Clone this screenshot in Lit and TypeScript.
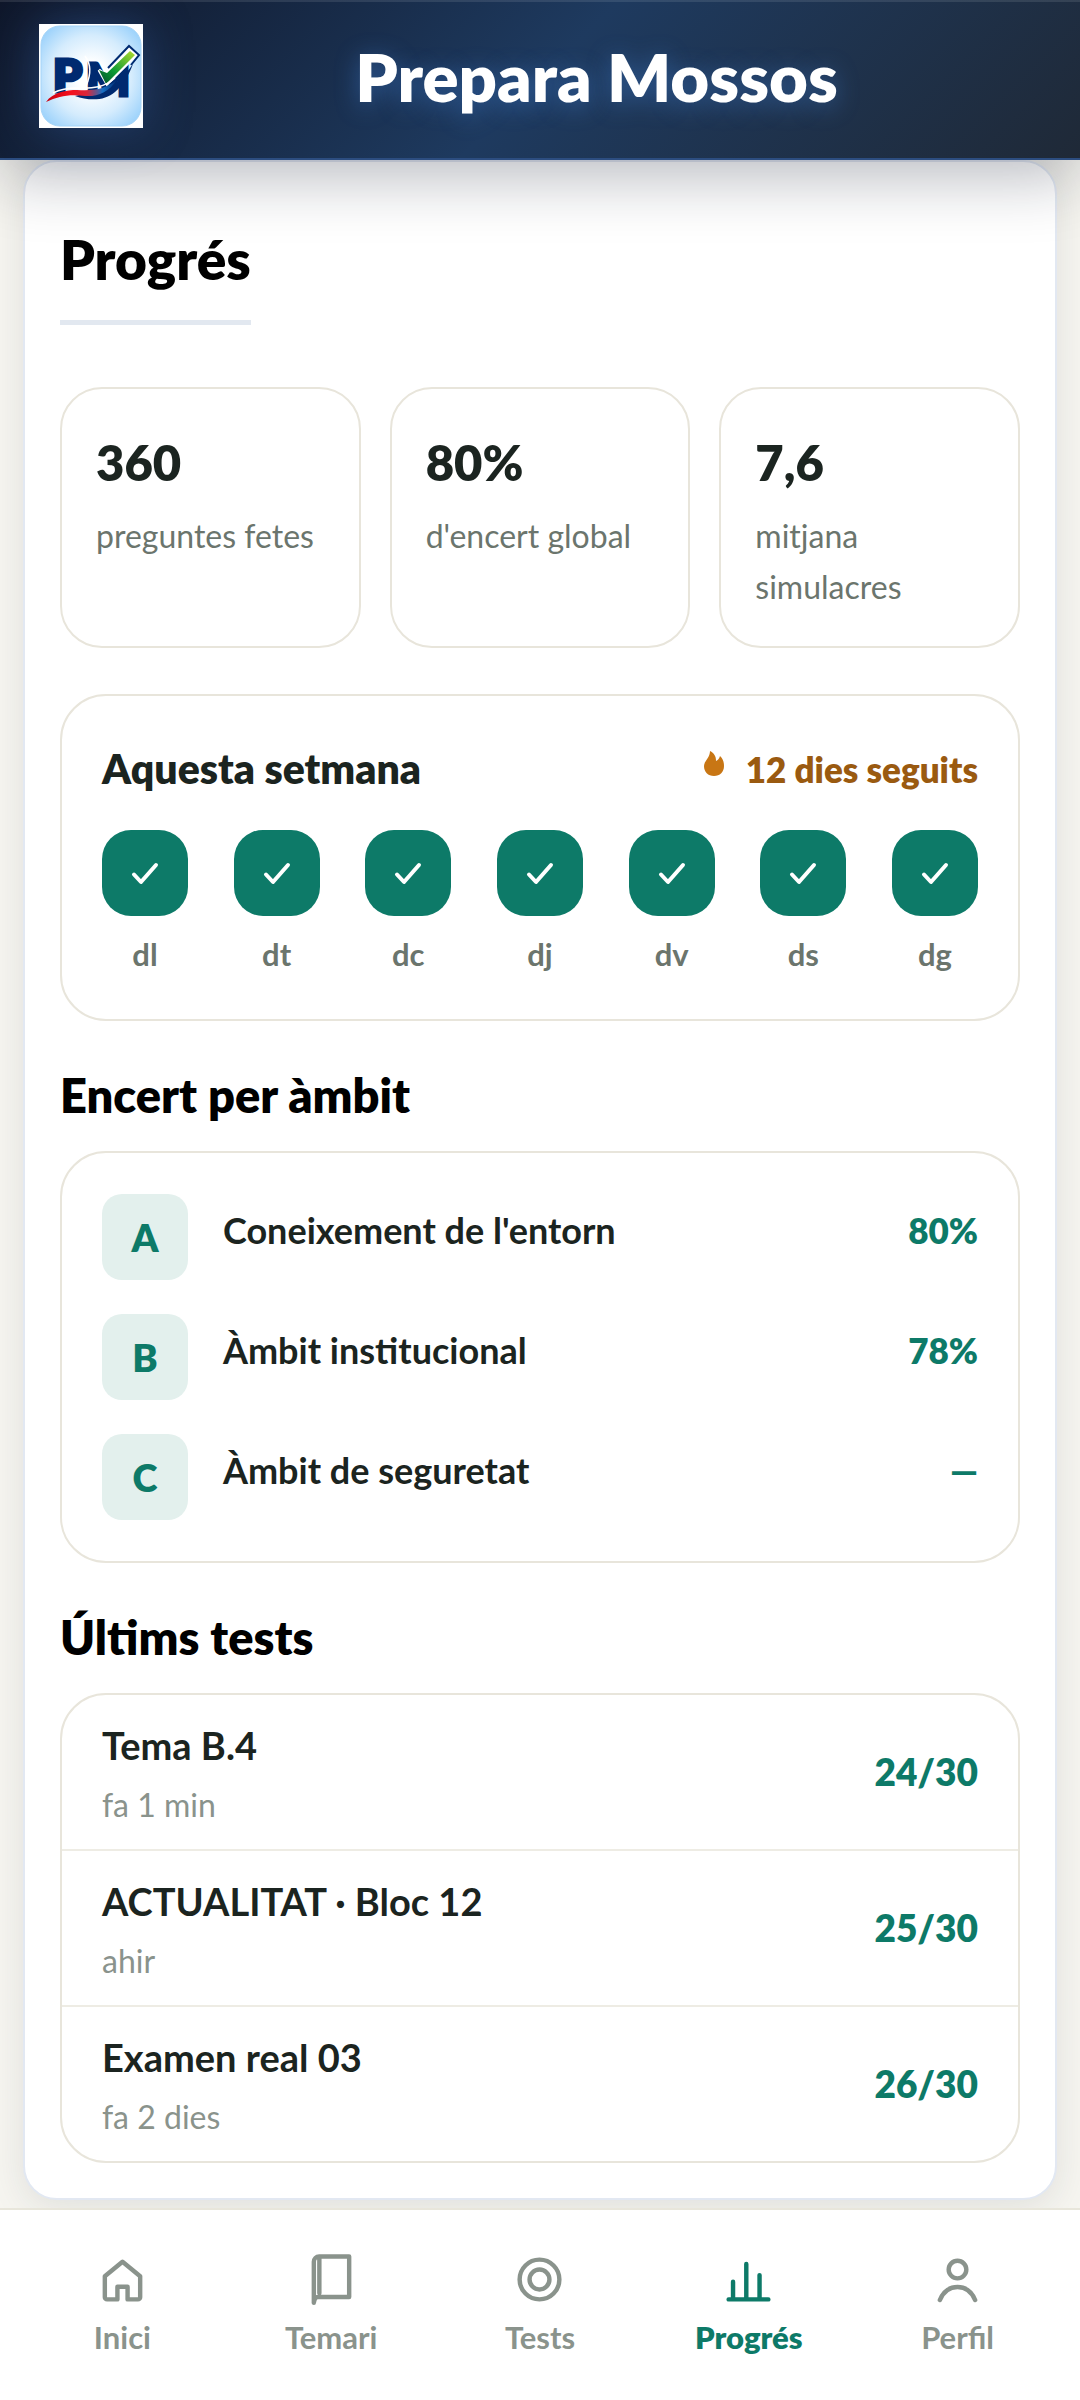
import { LitElement, html, css, svg } from "lit";
import { customElement, property } from "lit/decorators.js";

const NAV_ICONS: Record<string, unknown> = {
  home: svg`<path d="M4 10.5 12 4l8 6.5V20a1 1 0 0 1-1 1h-4.700v-5.700H9.700V21H5a1 1 0 0 1-1-1z"/>`,
  book: svg`<path d="M4 22.500V4a2.400 2.400 0 0 1 2.400-2.400H20v18.300H5.800c-1 0-1.500.7-1.800 2.600M6.500 1.700v16.500"/>`,
  target: svg`<circle cx="12" cy="12" r="9"/><circle cx="12" cy="12" r="4.500"/>`,
  bars: svg`<path d="M3 21h18M5 21v-8M11 21V5M17 21V10"/>`,
  user: svg`<circle cx="12" cy="7.500" r="4"/><path d="M4 21.300c1.600-3.800 4.300-5.900 8-5.900s6.400 2.100 8 5.900"/>`,
};

@customElement("pm-logo")
class PmLogo extends LitElement {
  static styles = css`
    :host { display: block; flex: none; width: 104px; height: 104px; box-shadow: 0 0 48px rgba(59, 110, 190, 0.4); }
    svg { display: block; width: 100%; height: 100%; }
    .mark { font: 800 46px "Lato", sans-serif; fill: #002a70; stroke: #002a70; stroke-width: 3; }
  `;
  render() {
    return html`<svg viewBox="0 0 104 104" role="img" aria-label="Prepara Mossos">
      <defs>
        <radialGradient id="tile" r="0.68">
          <stop offset="0.2" stop-color="#fff" />
          <stop offset="0.6" stop-color="#d5ecfd" />
          <stop offset="1" stop-color="#8fccfb" />
        </radialGradient>
        <linearGradient id="swoosh">
          <stop offset="0" stop-color="#c80010" />
          <stop offset="0.35" stop-color="#f5101d" />
          <stop offset="0.58" stop-color="#d8283c" />
          <stop offset="0.8" stop-color="#1670c4" />
          <stop offset="1" stop-color="#002a70" />
        </linearGradient>
        <linearGradient id="tick" x1="0" y1="1" x2="1" y2="0">
          <stop offset="0.1" stop-color="#04602f" />
          <stop offset="0.4" stop-color="#0b9a35" />
          <stop offset="1" stop-color="#b4dc2c" />
        </linearGradient>
      </defs>
      <rect width="104" height="104" fill="#fff" />
      <rect x="2" y="2" width="100" height="100" rx="19" fill="url(#tile)" stroke="#a5d4f8" />
      <text class="mark" x="47" y="72">M</text>
      <text class="mark" x="14" y="68">P</text>
      <path d="M46 32c6 8 6 19 1 30" fill="none" stroke="#fff" stroke-width="1.500" />
      <path d="M60 46 67 51 90 25 97 31 68 60z" fill="#fff" stroke="#fff" stroke-width="3" />
      <path d="M69 44 90 22l10 9-8 10" fill="none" stroke="#002a70" stroke-width="2" />
      <path d="M60 46 68 49 91 27 96 31 67 60z" fill="url(#tick)" />
      <path d="M36 72c14 5 30 5 40-4 8-7 14-17 18-28C84 54 72 66 56 67z" fill="#002a70" />
      <path d="M7 78c7-10 21-12 31-12 18 1 28-1 40-10-8 12-20 17-32 16-16-2-26 0-39 6z" fill="url(#swoosh)" />
      <path d="M14 69c8-4 16-5 24-5 16 1 28-1 38-10" fill="none" stroke="#fff" stroke-width="1.500" />
    </svg>`;
  }
}

@customElement("app-header")
class AppHeader extends LitElement {
  static styles = css`
    :host {
      display: flex;
      align-items: center;
      gap: 8px;
      box-sizing: border-box;
      padding: 24px 38px 30px 39px;
      border-bottom: 2px solid #2c4d80;
      background: linear-gradient(135deg, #0f172a 0%, #1e3a5f 50%, #1f2937 100%);
      box-shadow: inset 0 2px 0 rgba(255, 255, 255, 0.1), 0 16px 64px rgba(15, 23, 42, 0.3);
      position: relative;
      z-index: 2;
    }
    .title {
      flex: 1;
      margin: 0;
      color: #fff;
      font-size: 67px;
      font-weight: 800;
      line-height: 78px;
      text-align: center;
      text-shadow: 0 4px 24px rgba(70, 140, 230, 0.45);
    }
  `;
  render() {
    return html`<pm-logo></pm-logo><h1 class="title">Prepara Mossos</h1>`;
  }
}

@customElement("app-nav")
class AppNav extends LitElement {
  @property() current = "";
  static items = [
    ["home", "Inici"],
    ["book", "Temari"],
    ["target", "Tests"],
    ["bars", "Progrés"],
    ["user", "Perfil"],
  ];
  static styles = css`
    :host { display: block; position: sticky; bottom: 0; z-index: 2; background: #fff; border-top: 2px solid #e8e6db; }
    .bar { display: grid; grid-template-columns: repeat(5, 1fr); padding: 43px 18px 41px; }
    .item {
      display: flex;
      flex-direction: column;
      align-items: center;
      gap: 9px;
      color: #8a938c;
      font-size: 31px;
      font-weight: 700;
      line-height: 44px;
      text-decoration: none;
    }
    .item.on { color: #0d7a68; font-weight: 800; }
    .icon { width: 53px; height: 53px; fill: none; stroke: currentColor; stroke-width: 2; stroke-linecap: round; stroke-linejoin: round; }
  `;
  render() {
    return html`<nav class="bar" aria-label="Principal">
      ${AppNav.items.map(
        ([icon, label]) => html`<a
          class="item ${label === this.current ? "on" : ""}"
          href="#${icon}"
          aria-current=${label === this.current ? "page" : "false"}
          ><svg class="icon" viewBox="0 0 24 24" aria-hidden="true">${NAV_ICONS[icon]}</svg>${label}</a
        >`
      )}
    </nav>`;
  }
}

@customElement("app-root")
class AppRoot extends LitElement {
  stats = [
    ["360", "preguntes fetes"],
    ["80%", "d'encert global"],
    ["7,6", "mitjana simulacres"],
  ];
  days = ["dl", "dt", "dc", "dj", "dv", "ds", "dg"];
  areas = [
    ["A", "Coneixement de l'entorn", "80%"],
    ["B", "Àmbit institucional", "78%"],
    ["C", "Àmbit de seguretat", "—"],
  ];
  tests = [
    ["Tema B.4", "fa 1 min", "24/30"],
    ["ACTUALITAT · Bloc 12", "ahir", "25/30"],
    ["Examen real 03", "fa 2 dies", "26/30"],
  ];

  static styles = css`
    :host {
      display: flex;
      flex-direction: column;
      min-height: 100vh;
      background: #f6f5f0;
      color: #1b2420;
      font-family: "Lato", "Open Sans", sans-serif;
    }
    * { box-sizing: border-box; }
    h2, h3, p, ul { margin: 0; padding: 0; }
    ul { list-style: none; }
    .page {
      flex: 1;
      margin: 0 23px 8px;
      padding: 60px 35px 35px;
      background: #fff;
      border: 2px solid #e2e8f2;
      border-radius: 34px;
      box-shadow: 0 8px 36px rgba(30, 35, 45, 0.1);
    }
    .heading {
      width: fit-content;
      padding-bottom: 24px;
      border-bottom: 5px solid #e2e8f0;
      color: #000;
      font-size: 55px;
      font-weight: 800;
      line-height: 74px;
    }
    .card { border: 2px solid #e8e5db; border-radius: 46px; }
    .stats { display: grid; grid-template-columns: repeat(3, 1fr); gap: 29px; margin: 62px 0 46px; }
    .stat { padding: 34px 34px 34px; border: 2px solid #e8e5db; border-radius: 42px; }
    .value { font-size: 49px; font-weight: 800; line-height: 78px; }
    .label { margin-top: 9px; color: #6b756d; font-size: 32px; line-height: 51px; }
    .week { padding: 42px 40px 43px; }
    .week-head { display: flex; align-items: center; justify-content: space-between; line-height: 62px; }
    .week-title { font-size: 41px; font-weight: 800; }
    .streak { display: flex; align-items: center; gap: 22px; color: #9a5a10; font-size: 35px; font-weight: 800; }
    .flame { width: 20px; height: 36px; }
    .days { display: flex; justify-content: space-between; margin-top: 30px; }
    .day { display: grid; gap: 16px; width: 86px; color: #6b756d; font-size: 31px; font-weight: 700; line-height: 44px; text-align: center; }
    .done { display: grid; place-items: center; height: 86px; border-radius: 29px; background: #0d7a68; }
    .check { width: 28px; height: 23px; fill: none; stroke: #fff; stroke-width: 4; stroke-linecap: round; stroke-linejoin: round; }
    .section { margin: 43px 0 25px; color: #000; font-size: 47px; font-weight: 800; line-height: 62px; }
    .areas { display: grid; gap: 34px; padding: 41px 40px; }
    .area { display: flex; align-items: center; gap: 35px; font-size: 36px; line-height: 46px; }
    .badge { display: grid; place-items: center; width: 86px; height: 86px; border-radius: 20px; background: #e3f0ed; color: #0d7a68; font-size: 38px; font-weight: 800; }
    .area-body { display: flex; flex: 1; justify-content: space-between; padding-bottom: 14px; }
    .name { font-weight: 700; }
    .score { color: #0d7a68; font-size: 35px; font-weight: 800; }
    .test { display: flex; align-items: center; justify-content: space-between; padding: 18px 40px 16px; border-top: 2px solid #eeece4; font-size: 38px; }
    .test:first-child { border-top: 0; }
    .test-name { font-weight: 700; line-height: 64px; }
    .when { color: #8a938c; font-size: 32px; line-height: 56px; }
    .test .score { padding-bottom: 4px; font-size: 37px; }
  `;

  render() {
    return html`
      <app-header></app-header>
      <main class="page">
        <h2 class="heading">Progrés</h2>
        <section class="stats" aria-label="Resum">
          ${this.stats.map(([v, l]) => html`<div class="stat"><p class="value">${v}</p><p class="label">${l}</p></div>`)}
        </section>
        <section class="card week">
          <div class="week-head">
            <h3 class="week-title">Aquesta setmana</h3>
            <p class="streak">
              <svg class="flame" viewBox="0 0 20 36" aria-hidden="true">
                <path d="M6 0c4 2 6 5 6 10 2-1 3-2 4-5 3 3 4 6 4 10 0 6-4 10-10 10S0 21 0 15C0 10 6 7 6 0z" fill="#c87614" />
              </svg>
              12 dies seguits
            </p>
          </div>
          <ul class="days">
            ${this.days.map(
              (d) => html`<li class="day">
                <span class="done"><svg class="check" viewBox="0 0 28 23" aria-hidden="true"><path d="M3 12.500 10 20 25 3" /></svg></span>${d}
              </li>`
            )}
          </ul>
        </section>
        <h3 class="section">Encert per àmbit</h3>
        <ul class="card areas">
          ${this.areas.map(
            ([k, n, s]) => html`<li class="area">
              <span class="badge">${k}</span>
              <div class="area-body"><span class="name">${n}</span><span class="score">${s}</span></div>
            </li>`
          )}
        </ul>
        <h3 class="section">Últims tests</h3>
        <ul class="card">
          ${this.tests.map(
            ([n, w, s]) => html`<li class="test">
              <div><p class="test-name">${n}</p><p class="when">${w}</p></div>
              <span class="score">${s}</span>
            </li>`
          )}
        </ul>
      </main>
      <app-nav current="Progrés"></app-nav>
    `;
  }
}
